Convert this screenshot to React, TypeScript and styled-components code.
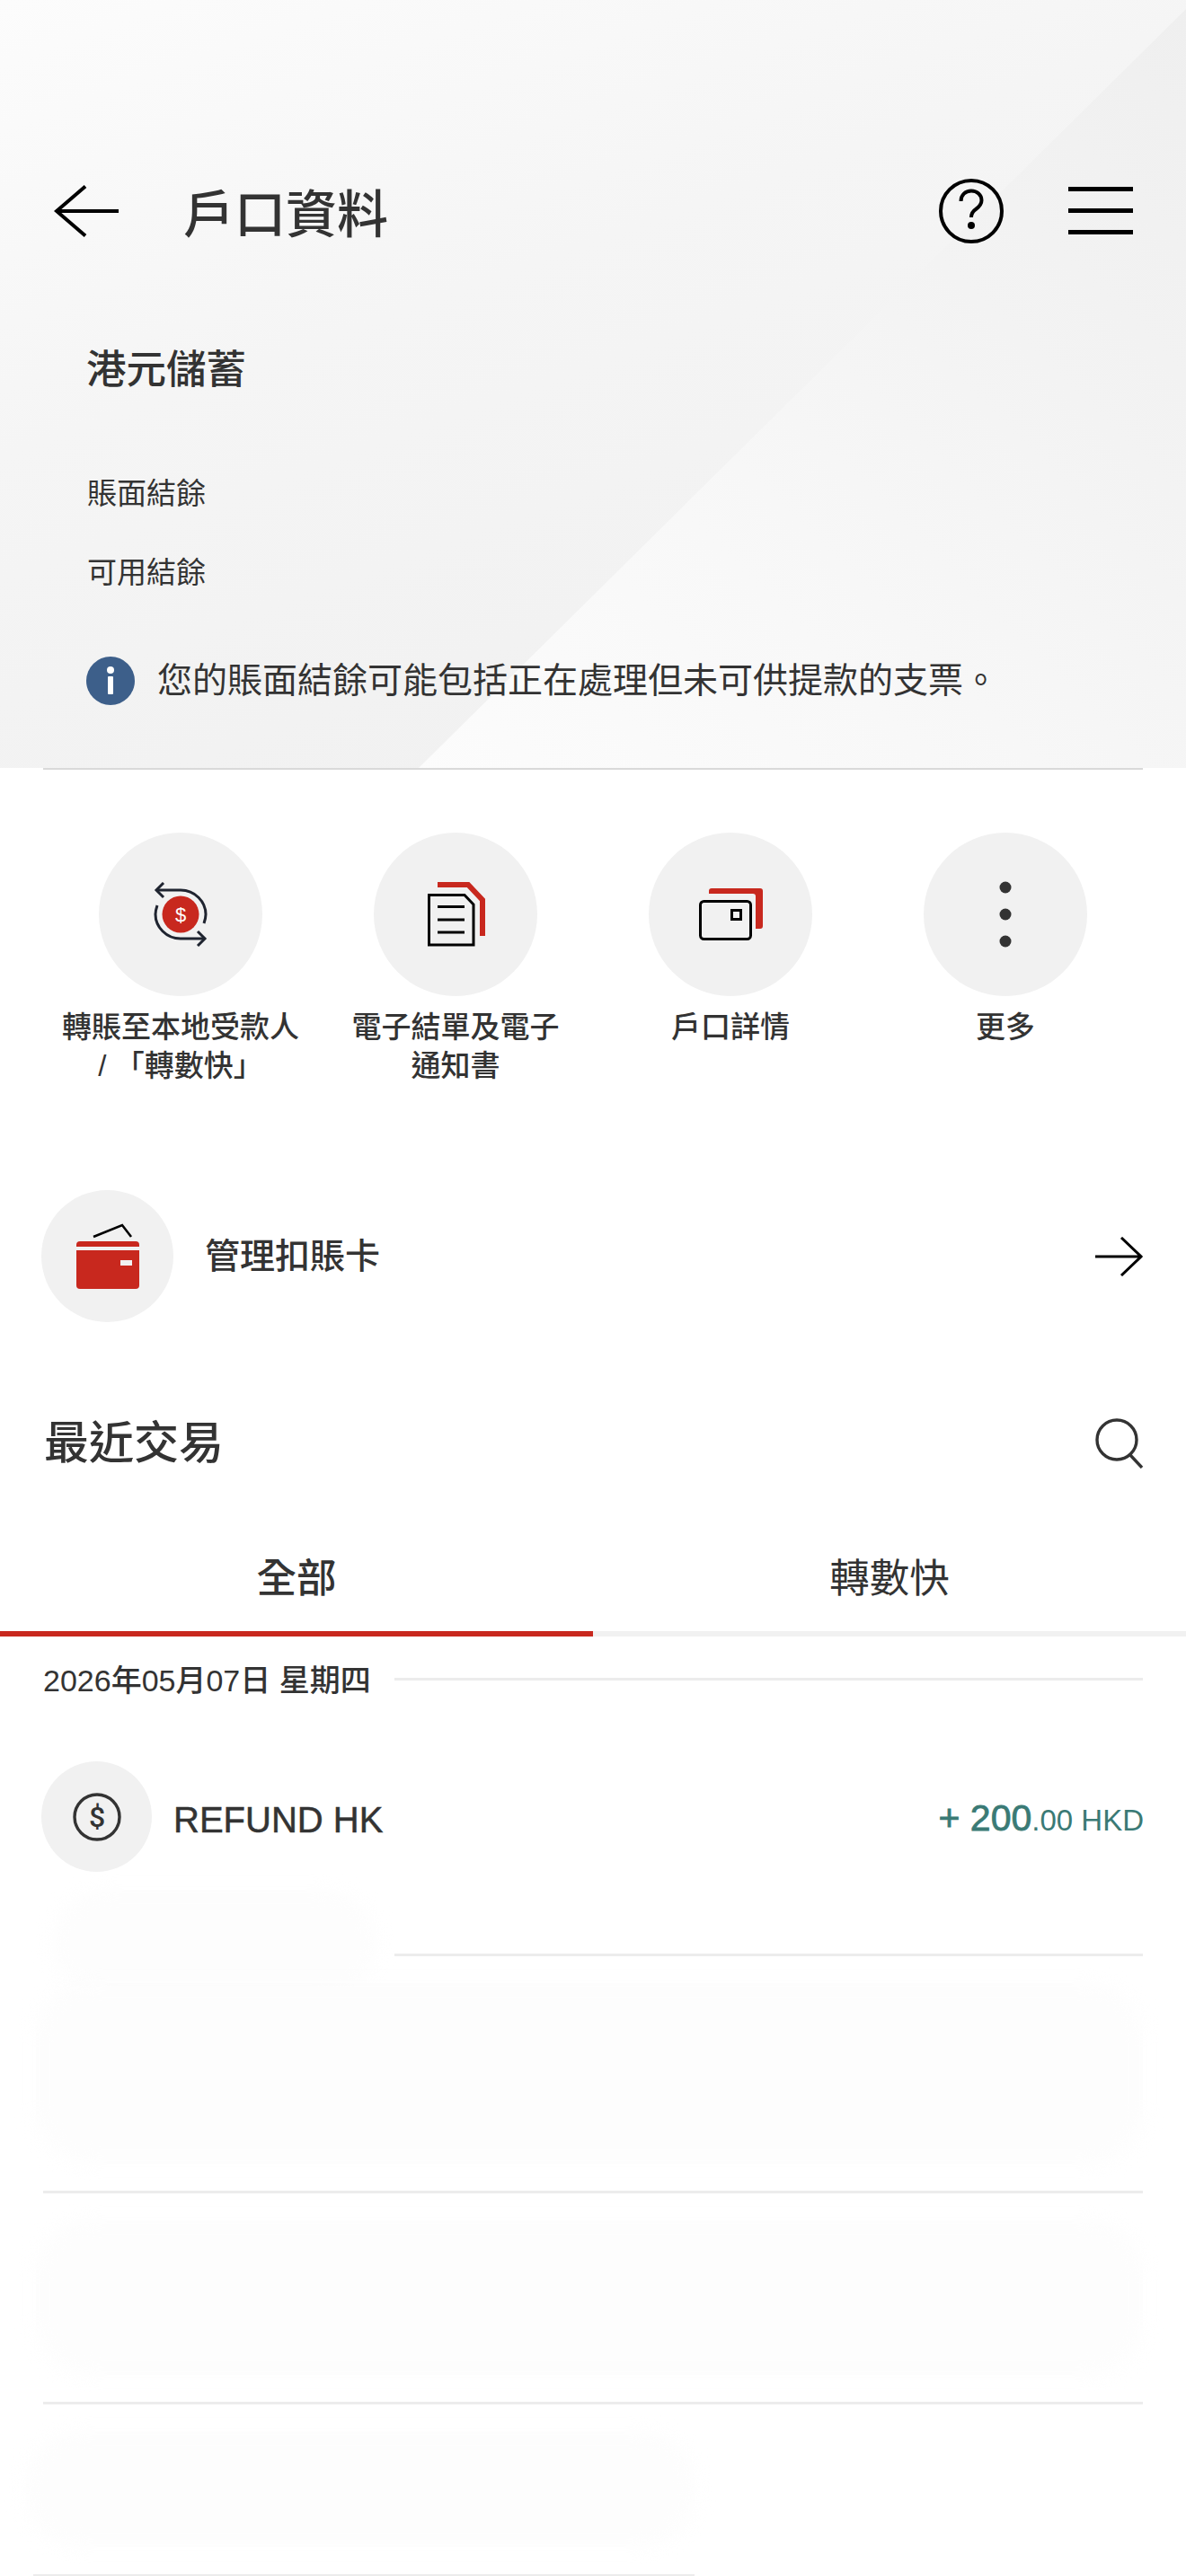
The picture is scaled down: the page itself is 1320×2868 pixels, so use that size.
import React from 'react';
import styled, { createGlobalStyle } from 'styled-components';

const GlobalStyle = createGlobalStyle`
  html, body {
    margin: 0;
    padding: 0;
    background: #ffffff;
  }
  body {
    font-family: "Liberation Sans", "Noto Sans CJK TC", sans-serif;
    color: #333333;
  }
`;

const Page = styled.div`
  position: relative;
  width: 1320px;
  height: 2868px;
  overflow: hidden;
  background: #ffffff;
`;

const Hero = styled.header`
  position: relative;
  height: 855px;
  padding-top: 190px;
  box-sizing: border-box;
  background: linear-gradient(160deg, #fcfcfc 0%, #f5f5f5 38%, #efefef 100%);

  &::before {
    content: '';
    position: absolute;
    inset: 0;
    clip-path: polygon(466px 855px, 1320px 10px, 1320px 855px);
    background: linear-gradient(225deg, #efefef 0%, #f3f3f3 26%, #f8f8f8 52%, #ffffff 100%);
  }
`;

const HeroContent = styled.div`
  position: relative;
`;

const NavBar = styled.nav`
  display: flex;
  align-items: center;
  height: 90px;
  padding: 0 60px;
`;

const NavTitle = styled.h1`
  flex: 1;
  margin: 9px 0 0 72px;
  font-size: 57px;
  line-height: 1;
  font-weight: 500;
`;

const NavIcons = styled.div`
  display: flex;
  align-items: center;
  gap: 72px;
  margin-right: -1px;
`;

const AccountName = styled.h2`
  margin: 100px 0 0 96px;
  font-size: 44.5px;
  line-height: 64px;
  font-weight: 500;
`;

const BalanceRow = styled.div`
  margin-left: 97px;
  font-size: 33px;
  line-height: 48px;
  height: 88px;

  &:first-of-type {
    margin-top: 82px;
  }
`;

const Notice = styled.div`
  display: flex;
  align-items: center;
  gap: 25px;
  margin: 28px 0 0 96px;
  font-size: 39px;
  line-height: 56px;
`;

const HeroDivider = styled.div`
  height: 2px;
  margin: 0 48px;
  background: #d9d9d9;
`;

const Actions = styled.section`
  display: grid;
  grid-template-columns: repeat(4, 306px);
  padding: 70px 48px 0;
`;

const Action = styled.div`
  display: flex;
  flex-direction: column;
  align-items: center;
  text-align: center;
`;

const Disc = styled.div<{ $size: number }>`
  flex: none;
  display: flex;
  align-items: center;
  justify-content: center;
  width: ${(p) => p.$size}px;
  height: ${(p) => p.$size}px;
  border-radius: 50%;
  background: #f1f1f1;
`;

const ActionLabel = styled.div`
  margin-top: 13px;
  height: 86px;
  font-size: 33px;
  line-height: 43px;
  font-weight: 500;
  white-space: pre-line;
`;

const ManageRow = styled.div`
  display: flex;
  align-items: center;
  margin-top: 117px;
  padding: 0 47px 0 46px;
`;

const ManageLabel = styled.div`
  flex: 1;
  margin-left: 35px;
  font-size: 39px;
  line-height: 56px;
  font-weight: 500;
`;

const SectionHead = styled.div`
  display: flex;
  align-items: center;
  justify-content: space-between;
  margin-top: 100px;
  height: 70px;
  padding: 0 47px 0 49px;
`;

const SectionTitle = styled.h2`
  margin: 0;
  font-size: 50px;
  line-height: 70px;
  font-weight: 500;
`;

const Tabs = styled.div`
  display: grid;
  grid-template-columns: 1fr 1fr;
  margin-top: 85px;
  background: linear-gradient(#f1f1f1, #f1f1f1) bottom / 100% 6px no-repeat;
`;

const Tab = styled.div<{ $active?: boolean }>`
  height: 89px;
  text-align: center;
  font-size: 44.5px;
  line-height: 62px;
  font-weight: ${(p) => (p.$active ? 500 : 400)};
  border-bottom: 6px solid ${(p) => (p.$active ? '#c8281e' : 'transparent')};
`;

const DateRow = styled.div`
  display: flex;
  align-items: center;
  gap: 26px;
  height: 52px;
  padding: 0 48px;
  margin-top: 23px;
`;

const DateLabel = styled.div`
  flex: none;
  width: 365px;
  font-size: 34px;
  line-height: 52px;
  font-weight: 500;
  white-space: nowrap;
`;

const Rule = styled.div`
  flex: 1;
  height: 3px;
  margin-top: -3px;
  background: #ececec;
`;

const TransactionRow = styled.div`
  display: flex;
  align-items: center;
  margin-top: 64px;
  padding: 0 50px 0 46px;
`;

const TransactionName = styled.div`
  flex: 1;
  margin: 6px 0 0 24px;
  font-size: 40px;
  line-height: 56px;
  -webkit-text-stroke: 0.5px #333333;
`;

const Amount = styled.div`
  margin: 6px -3px 0 0;
  color: #3a7a75;
  font-size: 33px;
  line-height: 56px;
  white-space: nowrap;

  strong {
    font-size: 41px;
    font-weight: 400;
    -webkit-text-stroke: 0.8px #3a7a75;
  }
`;

const MaskedRow = styled.div<{ $height: number; $inset?: number; $end?: number }>`
  position: relative;
  box-sizing: border-box;
  height: ${(p) => p.$height}px;
  margin-left: ${(p) => p.$inset ?? 48}px;
  margin-right: ${(p) => p.$end ?? 48}px;
  border-bottom: 3px solid #ececec;

  &::before {
    content: '';
    position: absolute;
    left: -8px;
    right: 0;
    top: 30px;
    bottom: 30px;
    border-radius: 60px;
    background: #fdfdfd;
    filter: blur(10px);
  }
`;

const FirstRule = styled(MaskedRow)`
  &::before {
    left: -380px;
    right: auto;
    width: 360px;
    top: 20px;
    bottom: -50px;
  }
`;

export default function App() {
  return (
    <Page>
      <GlobalStyle />
      <Hero>
        <HeroContent>
          <NavBar>
            <svg width="72" height="58" viewBox="0 0 72 58" fill="none" stroke="#000" strokeWidth="4">
              <path d="M72 29H3M35 1.5L3 29l32 27.5" />
            </svg>
            <NavTitle>戶口資料</NavTitle>
            <NavIcons>
              <svg width="72" height="72" viewBox="0 0 72 72" fill="none" stroke="#000" strokeWidth="4">
                <circle cx="36" cy="36" r="34" />
                <path d="M24.5 25C24.5 18 29.5 13.5 36 13.5S47.5 18 47.5 24C47.5 29 44.5 31.5 41 34C38 36 36 38 36 43" />
                <circle cx="36" cy="52" r="4" fill="#000" stroke="none" />
              </svg>
              <svg width="72" height="54" viewBox="0 0 72 54" fill="#000">
                <rect y="0" width="72" height="5" />
                <rect y="24" width="72" height="5" />
                <rect y="48" width="72" height="5" />
              </svg>
            </NavIcons>
          </NavBar>
          <AccountName>港元儲蓄</AccountName>
          <BalanceRow>賬面結餘</BalanceRow>
          <BalanceRow>可用結餘</BalanceRow>
          <Notice>
            <svg width="54" height="54" viewBox="0 0 54 54">
              <circle cx="27" cy="27" r="27" fill="#3d5f8a" />
              <circle cx="27" cy="15" r="4" fill="#fff" />
              <rect x="24" y="22" width="6" height="20" rx="1" fill="#fff" />
            </svg>
            您的賬面結餘可能包括正在處理但未可供提款的支票。
          </Notice>
        </HeroContent>
      </Hero>
      <HeroDivider />

      <Actions>
        <Action>
          <Disc $size={182}>
            <svg width="60" height="72" viewBox="0 0 60 72" fill="none" stroke="#1f2430" strokeWidth="3">
              <path d="M3 9H30C46 9 58 22 58 36c0 4-1 7-2 10M57 63H30C14 63 2 50 2 36c0-4 1-7 2-10" />
              <path d="M11 1L3 9l8 8M49 55l8 8-8 8" />
              <circle cx="30" cy="36" r="20.5" fill="#c8281e" stroke="none" />
              <text x="30" y="44" textAnchor="middle" fontSize="22" fontFamily="Liberation Sans" fill="#fff" stroke="none">$</text>
            </svg>
          </Disc>
          <ActionLabel>{'轉賬至本地受款人\n/ 「轉數快」'}</ActionLabel>
        </Action>
        <Action>
          <Disc $size={182}>
            <svg width="72" height="76" viewBox="0 0 72 76" fill="none">
              <path d="M16 5H50L66 22V62" stroke="#c8281e" strokeWidth="6" />
              <path d="M6.5 16.5H46L56 27V72H6.5Z" stroke="#000" strokeWidth="3" fill="#f1f1f1" />
              <path d="M16 29.5H46M16 44H46M16 58H46" stroke="#000" strokeWidth="3" />
            </svg>
          </Disc>
          <ActionLabel>{'電子結單及電子\n通知書'}</ActionLabel>
        </Action>
        <Action>
          <Disc $size={182}>
            <svg width="76" height="64" viewBox="0 0 76 64" fill="none">
              <path d="M14 9V6a3 3 0 0 1 3-3H71a3 3 0 0 1 3 3V45a3 3 0 0 1-3 3H66V12a3 3 0 0 0-3-3Z" fill="#c8281e" />
              <rect x="4.5" y="17.5" width="56" height="42" rx="4" stroke="#000" strokeWidth="3" />
              <rect x="39.5" y="27.5" width="10" height="10" stroke="#000" strokeWidth="3" />
            </svg>
          </Disc>
          <ActionLabel>戶口詳情</ActionLabel>
        </Action>
        <Action>
          <Disc $size={182}>
            <svg width="14" height="74" viewBox="0 0 14 74" fill="#333">
              <circle cx="7" cy="7" r="6.5" />
              <circle cx="7" cy="37" r="6.5" />
              <circle cx="7" cy="67" r="6.5" />
            </svg>
          </Disc>
          <ActionLabel>更多</ActionLabel>
        </Action>
      </Actions>

      <ManageRow>
        <Disc $size={147}>
          <svg width="72" height="74" viewBox="0 0 72 74" fill="none">
            <path d="M20 15L52 2L62 15" stroke="#000" strokeWidth="2.6" />
            <path d="M1 24a4 4 0 0 1 4-4H67a4 4 0 0 1 4 4V26H1Z" fill="#c8281e" />
            <path d="M1 30H71V69a4 4 0 0 1-4 4H5a4 4 0 0 1-4-4Z" fill="#c8281e" />
            <rect x="50" y="41" width="13" height="6" fill="#f1f1f1" />
          </svg>
        </Disc>
        <ManageLabel>管理扣賬卡</ManageLabel>
        <svg width="54" height="44" viewBox="0 0 54 44" fill="none" stroke="#000" strokeWidth="3">
          <path d="M0 22H51M29 1l22 21-22 21" />
        </svg>
      </ManageRow>

      <SectionHead>
        <SectionTitle>最近交易</SectionTitle>
        <svg width="54" height="56" viewBox="0 0 54 56" fill="none" stroke="#333" strokeWidth="3.4">
          <circle cx="24" cy="24" r="22" />
          <path d="M39 41l13 14" />
        </svg>
      </SectionHead>

      <Tabs>
        <Tab $active>全部</Tab>
        <Tab>轉數快</Tab>
      </Tabs>

      <DateRow>
        <DateLabel>2026年05月07日 星期四</DateLabel>
        <Rule />
      </DateRow>

      <TransactionRow>
        <Disc $size={123}>
          <svg width="56" height="56" viewBox="0 0 56 56" fill="none" stroke="#333" strokeWidth="3.4">
            <circle cx="28" cy="28" r="25" />
            <text x="28" y="39" textAnchor="middle" fontSize="32" fontWeight="500" fontFamily="Roboto" fill="#333" stroke="none">$</text>
          </svg>
        </Disc>
        <TransactionName>REFUND HK</TransactionName>
        <Amount>
          <strong>+ 200</strong>.00 HKD
        </Amount>
      </TransactionRow>

      <FirstRule $height={94} $inset={439} />
      <MaskedRow $height={264} />
      <MaskedRow $height={235} />
      <MaskedRow $height={192} $inset={37} $end={547} />
    </Page>
  );
}
